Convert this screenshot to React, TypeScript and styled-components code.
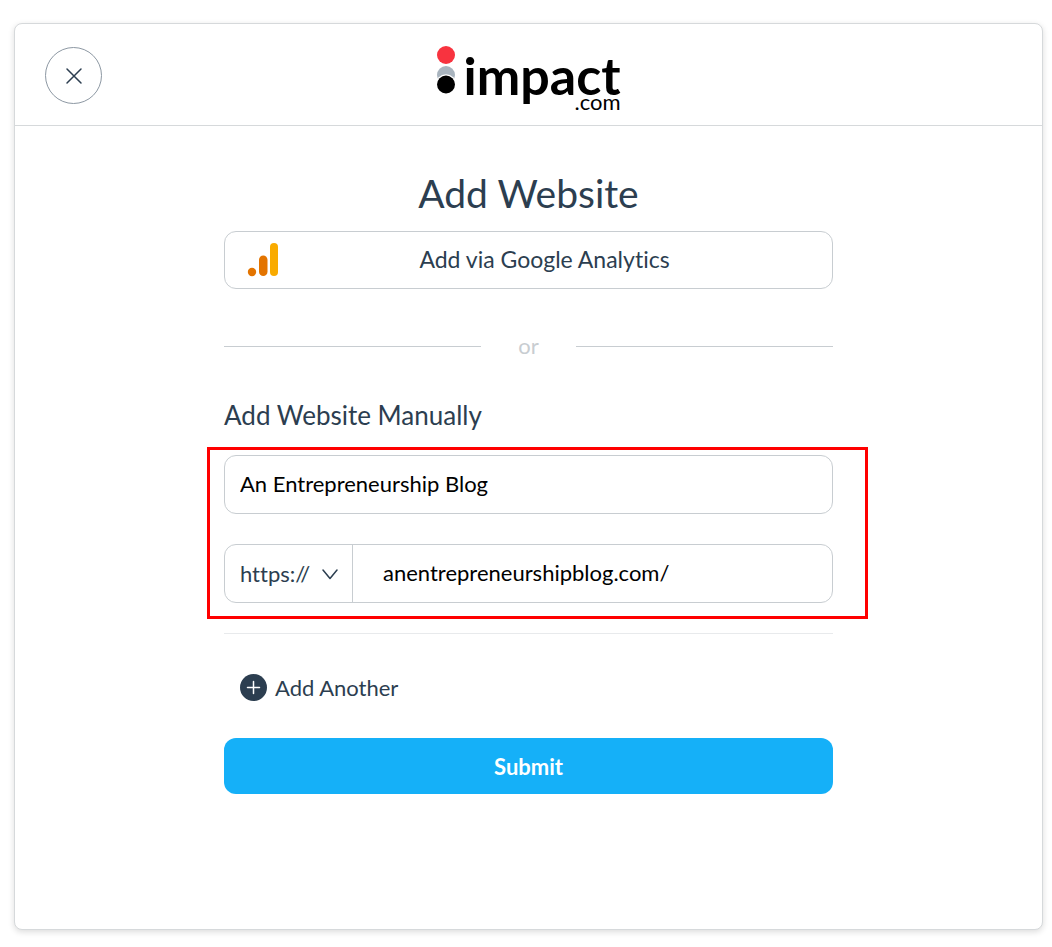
import React from 'react';
import styled, { createGlobalStyle } from 'styled-components';

const ink = '#2c3e50';
const line = '#c8cdd1';

const GlobalStyle = createGlobalStyle`
  *, *::before, *::after { box-sizing: border-box; }
  body {
    margin: 0;
    background: #fff;
    color: ${ink};
    font-family: Lato, "Liberation Sans", sans-serif;
    font-size: 22px;
    font-variant-ligatures: none;
  }
  button, input, select {
    font: inherit;
    font-variant-ligatures: none;
    color: inherit;
  }
`;

const Page = styled.div`
  display: flex;
  min-height: 100vh;
  padding: 23px 9px 17px 14px;
`;

const Card = styled.main`
  flex: 1;
  min-width: 0;
  border: 1px solid #d6d9db;
  border-radius: 8px;
  background: #fff;
  box-shadow: 0 2px 6px rgba(0, 0, 0, 0.14);
`;

const Header = styled.header`
  display: grid;
  grid-template-columns: 1fr auto 1fr;
  align-items: center;
  height: 102px;
  padding: 2px 30px 0;
  border-bottom: 1px solid #d6d9db;
`;

const CloseButton = styled.button`
  display: grid;
  place-items: center;
  width: 57px;
  height: 57px;
  padding: 0;
  border: 1px solid #8d98a3;
  border-radius: 50%;
  background: none;
`;

const Logo = styled.div`
  display: flex;
  align-items: flex-start;
  gap: 7px;
  height: 63px;
  color: #000;
`;

const Wordmark = styled.div`
  display: flex;
  flex-direction: column;
  align-items: flex-end;
  padding-top: 5px;
`;

const LogoName = styled.span`
  font-size: 52px;
  font-weight: 700;
  line-height: 52px;
`;

const LogoSuffix = styled.span`
  margin-top: -6px;
  font-size: 22px;
  line-height: 14px;
`;

const Form = styled.form`
  width: 100%;
  max-width: 609px;
  margin: 0 auto;
  padding: 43px 0 48px;
`;

const Title = styled.h1`
  margin: 0 0 14px;
  font-size: 39px;
  font-weight: 400;
  line-height: 48px;
  text-align: center;
`;

const AnalyticsButton = styled.button`
  display: flex;
  align-items: center;
  width: 100%;
  height: 58px;
  padding: 0 22px;
  border: 1px solid ${line};
  border-radius: 12px;
  background: #fff;
  font-size: 23px;
`;

const ButtonLabel = styled.span`
  flex: 1;
  padding-bottom: 2px;
  text-align: center;
`;

const Divider = styled.div`
  display: flex;
  align-items: center;
  gap: 37px;
  margin: 43px 0 39px;
  color: ${line};
  line-height: 28px;

  &::before, &::after {
    content: "";
    flex: 1;
    height: 1px;
    background: ${line};
  }
`;

const SectionTitle = styled.h2`
  margin: 0 0 24px;
  font-size: 26px;
  font-weight: 400;
  line-height: 32px;
`;

const Fields = styled.div`
  position: relative;
  display: grid;
  gap: 30px;

  &::after {
    content: "";
    position: absolute;
    inset: -8px -35px -16px -17px;
    border: 3px solid #f00;
    pointer-events: none;
  }
`;

const NameInput = styled.input`
  width: 100%;
  height: 59px;
  padding: 0 15px 2px;
  border: 1px solid ${line};
  border-radius: 12px;
  background: #fff;
  color: #000;
`;

const UrlField = styled.div`
  display: flex;
  height: 59px;
  border: 1px solid ${line};
  border-radius: 12px;
`;

const ProtocolBox = styled.div`
  position: relative;
  width: 128px;
  border-right: 1px solid ${line};

  svg {
    position: absolute;
    top: 24px;
    right: 14px;
    pointer-events: none;
  }
`;

const ProtocolSelect = styled.select`
  width: 100%;
  height: 100%;
  padding: 0 40px 0 15px;
  border: 0;
  border-radius: 12px 0 0 12px;
  background: none;
  appearance: none;
`;

const UrlInput = styled.input`
  flex: 1;
  min-width: 0;
  padding: 0 30px 2px;
  border: 0;
  border-radius: 0 12px 12px 0;
  background: none;
  color: #000;
`;

const Rule = styled.hr`
  height: 1px;
  margin: 30px 0 38px;
  border: 0;
  background: #e8eaec;
`;

const AddButton = styled.button`
  display: flex;
  align-items: center;
  gap: 8px;
  height: 30px;
  margin: 0 0 36px 16px;
  padding: 0;
  border: 0;
  background: none;
`;

const SubmitButton = styled.button`
  width: 100%;
  height: 56px;
  border: 0;
  border-radius: 12px;
  background: #15b0f8;
  color: #fff;
  font-weight: 700;
`;

export default function App() {
  return (
    <>
      <GlobalStyle />
      <Page>
        <Card>
          <Header>
            <CloseButton type="button" aria-label="Close">
              <svg width="18" height="18" viewBox="0 0 18 18" fill="none" stroke={ink} strokeWidth="1.5" strokeLinecap="round">
                <path d="M2 2 16 16M16 2 2 16" />
              </svg>
            </CloseButton>
            <Logo>
              <svg width="20" height="52" viewBox="0 0 20 52">
                <circle cx="10" cy="11" r="9" fill="#f8333f" />
                <circle cx="10" cy="31" r="9" fill="#a9b4be" />
                <circle cx="10" cy="40.5" r="10.2" fill="#fff" />
                <circle cx="10" cy="40.5" r="9" fill="#000" />
              </svg>
              <Wordmark>
                <LogoName>impact</LogoName>
                <LogoSuffix>.com</LogoSuffix>
              </Wordmark>
            </Logo>
          </Header>
          <Form onSubmit={(e) => e.preventDefault()}>
            <Title>Add Website</Title>
            <AnalyticsButton type="button">
              <svg width="32" height="36" viewBox="0 0 32 36">
                <circle cx="5" cy="30" r="4.2" fill="#e37400" />
                <rect x="12" y="13.5" width="8.5" height="20.5" rx="4.25" fill="#e37400" />
                <rect x="23" y="1" width="8" height="33" rx="4" fill="#f9ab00" />
              </svg>
              <ButtonLabel>Add via Google Analytics</ButtonLabel>
            </AnalyticsButton>
            <Divider>or</Divider>
            <SectionTitle>Add Website Manually</SectionTitle>
            <Fields>
              <NameInput aria-label="Website name" defaultValue="An Entrepreneurship Blog" />
              <UrlField>
                <ProtocolBox>
                  <ProtocolSelect aria-label="Protocol" defaultValue="https://">
                    <option>https://</option>
                    <option>http://</option>
                  </ProtocolSelect>
                  <svg width="16" height="11" viewBox="0 0 16 11" fill="none" stroke={ink} strokeWidth="1.5" strokeLinecap="round" strokeLinejoin="round">
                    <path d="M1 1 8 9.5 15 1" />
                  </svg>
                </ProtocolBox>
                <UrlInput aria-label="Website address" defaultValue="anentrepreneurshipblog.com/" />
              </UrlField>
            </Fields>
            <Rule />
            <AddButton type="button">
              <svg width="27" height="27" viewBox="0 0 27 27">
                <circle cx="13.5" cy="13.5" r="13.5" fill={ink} />
                <path d="M7.5 13.5h12M13.5 7.5v12" stroke="#fff" strokeWidth="1.5" strokeLinecap="round" />
              </svg>
              Add Another
            </AddButton>
            <SubmitButton type="submit">Submit</SubmitButton>
          </Form>
        </Card>
      </Page>
    </>
  );
}
